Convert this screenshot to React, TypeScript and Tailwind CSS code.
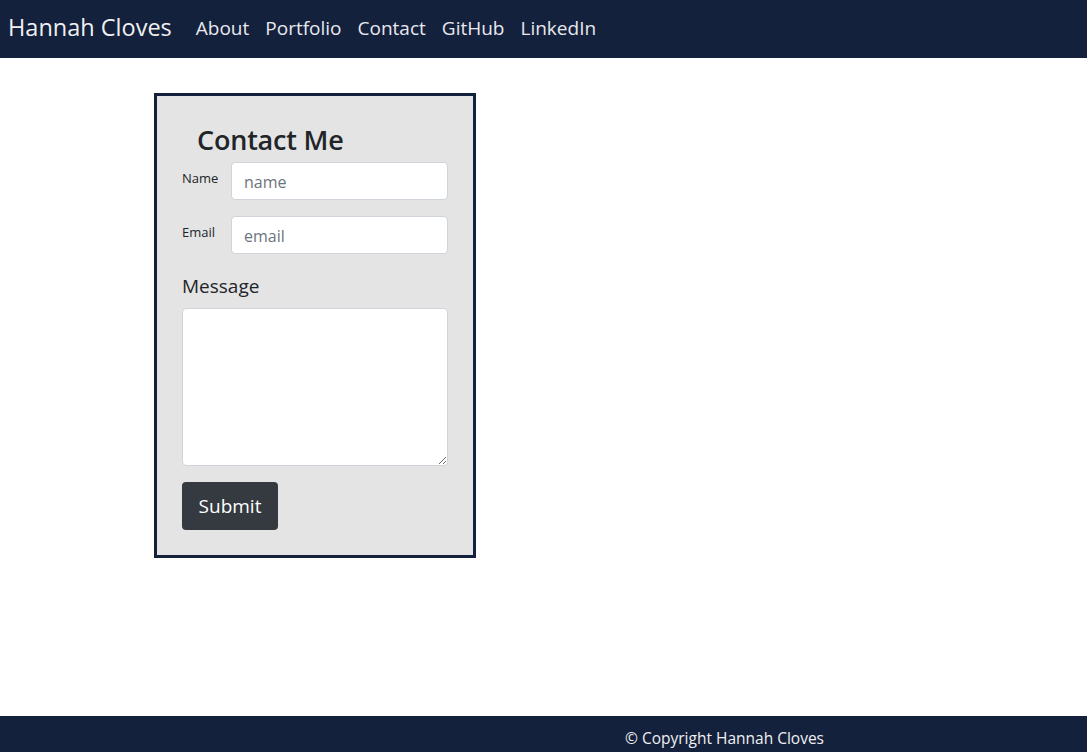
import React from "react";

export default function App() {
  const font = { fontFamily: '"Open Sans", "Noto Sans", sans-serif' };
  return (
    <div className="min-h-[752px] flex flex-col bg-white" style={font}>
      <nav className="h-[58px] bg-[#14213d] flex items-center pl-[8px] pb-[2px]">
        <span className="text-[23.5px] text-[#f0f0f0] mr-[16px]">Hannah Cloves</span>
        <div className="flex items-center">
          {["About", "Portfolio", "Contact", "GitHub", "LinkedIn"].map((l) => (
            <span key={l} className="text-[19px] text-[#e8e8ee] px-[8px]">{l}</span>
          ))}
        </div>
      </nav>
      <main className="flex-1 pt-[35px] pl-[154px]">
        <div className="w-[322px] h-[465px] border-[3px] border-[#14213d] bg-[#e4e4e4] px-[25px] pt-[26px]">
          <h2 className="text-[27px] font-semibold text-[#212529] pl-[15px] leading-[36px] tracking-[-0.2px]">Contact Me</h2>
          <div className="flex items-start mt-[4px]">
            <label className="text-[13px] text-[#212529] w-[49px] pt-[7px] leading-[18px]">Name</label>
            <input placeholder="name" className="w-[217px] h-[38px] bg-white border border-[#ced4da] rounded-[4px] px-[12px] pt-[2px] text-[16px] placeholder:text-[#6c757d] outline-none" />
          </div>
          <div className="flex items-start mt-[16px]">
            <label className="text-[13px] text-[#212529] w-[49px] pt-[7px] leading-[18px]">Email</label>
            <input placeholder="email" className="w-[217px] h-[38px] bg-white border border-[#ced4da] rounded-[4px] px-[12px] pt-[2px] text-[16px] placeholder:text-[#6c757d] outline-none" />
          </div>
          <label className="block text-[19px] text-[#212529] mt-[18px] leading-[28px]">Message</label>
          <textarea className="block w-[266px] h-[158px] mt-[8px] bg-white border border-[#ced4da] rounded-[4px] outline-none" />
          <button className="mt-[16px] w-[96px] h-[48px] bg-[#343a40] text-white text-[19px] rounded-[4px]">Submit</button>
        </div>
      </main>
      <footer className="h-[36px] bg-[#14213d] flex items-center pl-[625px] pt-[9px]">
        <span className="text-[15.5px] text-[#f0f0f0]">© Copyright Hannah Cloves</span>
      </footer>
    </div>
  );
}
